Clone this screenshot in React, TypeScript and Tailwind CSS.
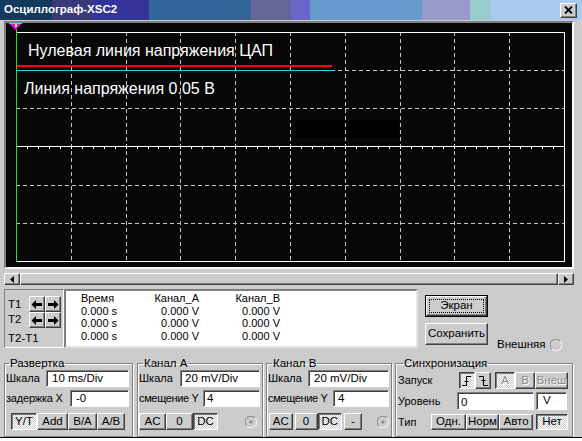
import React from "react";

const RAISED =
  "bg-[#cccccc] border border-t-white border-l-white border-r-[#404040] border-b-[#404040] shadow-[inset_-1px_-1px_0_#808080]";
const PRESSED =
  "bg-[repeating-conic-gradient(#ffffff_0%_25%,#cccccc_0%_50%)] bg-size-[2px_2px] border border-t-[#404040] border-l-[#404040] border-r-white border-b-white shadow-[inset_1px_1px_0_#808080]";
const FIELD =
  "bg-white border border-t-[#808080] border-l-[#808080] border-r-white border-b-white shadow-[inset_1px_1px_0_#404040] flex items-center whitespace-nowrap text-[11.5px] leading-none";

function Btn({
  cls,
  on = false,
  dis = false,
  children,
}: {
  cls: string;
  on?: boolean;
  dis?: boolean;
  children?: React.ReactNode;
}) {
  return (
    <div
      className={`${on ? PRESSED : RAISED} ${cls} flex items-center justify-center text-[11.5px] leading-none whitespace-nowrap ${
        dis ? "text-[#8a8a8a] [text-shadow:1px_1px_0_#ffffff]" : "text-black"
      }`}
    >
      {children}
    </div>
  );
}

function Group({
  cls,
  legendCls,
  title,
  children,
}: {
  cls: string;
  legendCls: string;
  title: string;
  children?: React.ReactNode;
}) {
  return (
    <fieldset
      className={`${cls} h-[80px] min-w-0 border border-[#808080] shadow-[inset_1px_1px_0_#ffffff,1px_1px_0_#ffffff] text-[11px]`}
    >
      <legend className={`${legendCls} px-[1px] text-[11.5px] leading-[13px]`}>{title}</legend>
      {children}
    </fieldset>
  );
}

function Radio({ dot = false }: { dot?: boolean }) {
  return (
    <svg width="12" height="12" viewBox="0 0 12 12" className="block">
      <path d="M10.2 1.8 A5.5 5.5 0 0 0 1.8 10.2" stroke="#808080" strokeWidth="1" fill="none" />
      <path d="M1.8 10.2 A5.5 5.5 0 0 0 10.2 1.8" stroke="#ffffff" strokeWidth="1" fill="none" />
      <circle cx="6" cy="6" r="4" fill="#cccccc" />
      {dot && <circle cx="6" cy="6" r="1.6" fill="#8a8a8a" />}
    </svg>
  );
}

function Arrow({ dir }: { dir: "l" | "r" }) {
  return (
    <div className={`${RAISED} w-[16px] h-[16px] flex items-center justify-center`}>
      <svg width="12" height="11" viewBox="0 0 12 11" className="block">
        {dir === "l" ? (
          <polygon points="0.5,5.5 5,1 5,4 11,4 11,7 5,7 5,10" fill="#000" />
        ) : (
          <polygon points="11.5,5.5 7,1 7,4 1,4 1,7 7,7 7,10" fill="#000" />
        )}
      </svg>
    </div>
  );
}

function ScopeGrid() {
  const L = 10,
    R = 558,
    T = 9,
    B = 238;
  const vx = [1, 2, 3, 4, 5, 6, 7, 8, 9].map((i) => Math.round(L + 54.8 * i) + 0.5);
  const hy = [1, 2, 4, 5].map((j) => Math.round(T + 38.1667 * j) + 0.5);
  const cy = 123.5;
  const ticks = Array.from({ length: 49 }, (_, i) => Math.round(L + 10.96 * (i + 1)) + 0.5);
  return (
    <svg width="566" height="244" viewBox="0 0 566 244" className="block" shapeRendering="crispEdges">
      <rect x="289" y="97" width="103" height="18" fill="#000000" />
      {vx.map((x) => (
        <line key={"v" + x} x1={x} y1={T} x2={x} y2={B} stroke="#c4c4c4" strokeDasharray="4 3" />
      ))}
      {hy.map((y) => (
        <line key={"h" + y} x1={L} y1={y} x2={R} y2={y} stroke="#c4c4c4" strokeDasharray="4 3" />
      ))}
      <line x1={L} y1={T + 0.5} x2={R + 1} y2={T + 0.5} stroke="#ffffff" />
      <line x1={R + 0.5} y1={T} x2={R + 0.5} y2={B + 1} stroke="#ffffff" />
      <line x1={L} y1={B + 0.5} x2={R + 1} y2={B + 0.5} stroke="#ffffff" />
      <line x1={L} y1={cy} x2={R + 1} y2={cy} stroke="#ffffff" strokeWidth="1" />
      {ticks.map((x) => (
        <line key={"t" + x} x1={x} y1={cy} x2={x} y2={cy + 2.5} stroke="#ffffff" />
      ))}
      <rect x={L} y="42" width="316" height="2" fill="#ff0000" />
      <rect x={L} y="47" width="317" height="1" fill="#22d8d8" />
      <line x1={L + 0.5} y1="6" x2={L + 0.5} y2={B + 1} stroke="#22dd22" />
      <polygon points="3,0 16,0 9.5,7" fill="#ff00ff" shapeRendering="auto" />
      <rect x="3" y="0" width="13" height="1" fill="#00ffff" />
      <rect x="8.5" y="1" width="2" height="3" fill="#ffff00" />
    </svg>
  );
}

export default function App() {
  return (
    <div className="w-[582px] h-[441px] overflow-hidden bg-[#cccccc] flex flex-col text-black font-['Liberation_Sans',Arial,sans-serif]">
      {/* Title bar */}
      <div className="h-[20px] shrink-0 flex items-center justify-between pl-[4px] pr-[5px] bg-[linear-gradient(to_right,#133a5e_0px,#133a5e_52px,#38387a_52px,#38387a_93px,#333399_93px,#333399_149px,#336699_149px,#336699_251px,#666699_251px,#666699_291px,#6666cc_291px,#6666cc_310px,#6699cc_310px,#6699cc_422px,#9999cc_422px,#9999cc_470px,#99cccc_470px,#99cccc_491px,#a6caf0_491px)]">
        <span className="text-white font-bold text-[11.5px] leading-none whitespace-nowrap">Осциллограф-XSC2</span>
        <div className={`${RAISED} w-[17px] h-[15px] flex items-center justify-center`}>
          <svg width="9" height="8" viewBox="0 0 9 8" className="block">
            <path d="M1 0.5 L8 7.5 M8 0.5 L1 7.5" stroke="#000" strokeWidth="1.8" />
          </svg>
        </div>
      </div>

      {/* Scope screen */}
      <div className="ml-[4px] mt-[1px] w-[570px] h-[248px] shrink-0 border-2 border-t-[#808080] border-l-[#808080] border-r-white border-b-white">
        <div className="relative w-[566px] h-[244px] bg-[#070707]">
          <ScopeGrid />
          <div className="absolute left-[22px] top-[20px] text-white text-[16px] leading-[16px] whitespace-nowrap">
            Нулевая линия напряжения ЦАП
          </div>
          <div className="absolute left-[18px] top-[58px] text-white text-[16px] leading-[16px] whitespace-nowrap">
            Линия напряжения 0.05 В
          </div>
        </div>
      </div>

      {/* Scrollbar */}
      <div className="ml-[4px] mt-[4px] w-[570px] h-[12px] shrink-0 flex bg-[#e4e4e4]">
        <div className={`${RAISED} w-[16px] h-[12px] flex items-center justify-center`}>
          <svg width="4" height="7" viewBox="0 0 4 7" className="block">
            <polygon points="0,3.5 4,0 4,7" fill="#000" />
          </svg>
        </div>
        <div className={`${RAISED} flex-1 h-[12px]`} />
        <div className={`${RAISED} w-[16px] h-[12px] flex items-center justify-center`}>
          <svg width="4" height="7" viewBox="0 0 4 7" className="block">
            <polygon points="4,3.5 0,0 0,7" fill="#000" />
          </svg>
        </div>
      </div>

      {/* Cursor / readout row */}
      <div className="flex ml-[4px] mt-[4px] h-[59px] shrink-0">
        <div className="w-[60px] h-[59px] border border-t-[#808080] border-l-[#808080] border-r-white border-b-white pt-[6px] pl-[3px] text-[11.5px]">
          <div className="flex items-center h-[16px]">
            <span className="w-[21px] leading-[14px]">T1</span>
            <Arrow dir="l" />
            <Arrow dir="r" />
          </div>
          <div className="flex items-start h-[16px]">
            <span className="w-[21px] leading-[14px]">T2</span>
            <Arrow dir="l" />
            <Arrow dir="r" />
          </div>
          <div className="mt-[3px] leading-[14px]">T2-T1</div>
        </div>

        <div className="w-[354px] h-[59px] bg-white border-2 border-t-[#808080] border-l-[#808080] border-r-[#e4e4e4] border-b-[#e4e4e4] pl-[15px] pt-[1px] text-[11px]">
          <div className="grid grid-cols-[73px_45px_81px] grid-rows-[13px_12px_13px_13px] leading-[13px] whitespace-nowrap">
            <span>Время</span>
            <span className="text-right">Канал_А</span>
            <span className="text-right">Канал_В</span>
            <span>0.000 s</span>
            <span className="text-right">0.000 V</span>
            <span className="text-right">0.000 V</span>
            <span>0.000 s</span>
            <span className="text-right">0.000 V</span>
            <span className="text-right">0.000 V</span>
            <span>0.000 s</span>
            <span className="text-right">0.000 V</span>
            <span className="text-right">0.000 V</span>
          </div>
        </div>

        <div className="ml-[7px] mt-[6px] flex flex-col gap-[6px]">
          <div className="w-[63px] h-[22px] border border-black">
            <div className={`${RAISED} w-full h-full p-[2px] flex`}>
              <div className="flex-1 border border-dotted border-black flex items-center justify-center text-[11.5px] leading-none">
                Экран
              </div>
            </div>
          </div>
          <Btn cls="w-[63px] h-[22px]">Сохранить</Btn>
        </div>

        <div className="ml-[9px] mt-[50px] h-[12px] flex items-center gap-[5px] text-[11.5px] leading-none whitespace-nowrap">
          <span>Внешняя</span>
          <Radio />
        </div>
      </div>

      {/* Group boxes */}
      <div className="flex ml-[4px] mt-[9px] h-[80px] shrink-0">
        <Group cls="w-[129px] pl-[1px] pr-[3px]" legendCls="ml-[3px]" title="Развертка">
          <div className="flex items-center justify-between h-[17px] whitespace-nowrap">
            <span>Шкала</span>
            <div className={`${FIELD} w-[83px] h-[17px] pl-[5px]`}>10 ms/Div</div>
          </div>
          <div className="mt-[3px] flex items-center justify-between h-[17px] whitespace-nowrap">
            <span className="tracking-[-0.2px]">задержка X</span>
            <div className={`${FIELD} w-[59px] h-[17px] pl-[5px]`}>-0</div>
          </div>
          <div className="mt-[6px] ml-[5px] flex">
            <Btn cls="w-[26px] h-[17px]" on>
              Y/T
            </Btn>
            <Btn cls="w-[31px] h-[17px]">Add</Btn>
            <Btn cls="w-[29px] h-[17px]">B/A</Btn>
            <Btn cls="w-[28px] h-[17px]">A/B</Btn>
          </div>
        </Group>

        <Group cls="ml-[4px] w-[126px] pl-[1px] pr-[2px]" legendCls="ml-[4px]" title="Канал А">
          <div className="flex items-center justify-between h-[17px] whitespace-nowrap">
            <span>Шкала</span>
            <div className={`${FIELD} w-[80px] h-[17px] pl-[4px]`}>20 mV/Div</div>
          </div>
          <div className="mt-[3px] flex items-center justify-between h-[17px] whitespace-nowrap">
            <span className="tracking-[-0.35px]">смещение Y</span>
            <div className={`${FIELD} w-[57px] h-[17px] pl-[3px]`}>4</div>
          </div>
          <div className="mt-[6px] flex items-center">
            <Btn cls="w-[27px] h-[17px]">AC</Btn>
            <Btn cls="w-[27px] h-[17px]">0</Btn>
            <Btn cls="w-[25px] h-[17px]" on>
              DC
            </Btn>
            <div className="ml-auto mr-[3px]">
              <Radio dot />
            </div>
          </div>
        </Group>

        <Group cls="ml-[3px] w-[126px] pl-[1px] pr-[2px]" legendCls="ml-[4px]" title="Канал В">
          <div className="flex items-center justify-between h-[17px] whitespace-nowrap">
            <span>Шкала</span>
            <div className={`${FIELD} w-[81px] h-[17px] pl-[5px]`}>20 mV/Div</div>
          </div>
          <div className="mt-[3px] flex items-center justify-between h-[17px] whitespace-nowrap">
            <span className="tracking-[-0.35px]">смещение Y</span>
            <div className={`${FIELD} w-[56px] h-[17px] pl-[4px]`}>4</div>
          </div>
          <div className="mt-[6px] ml-[1px] flex items-center">
            <Btn cls="w-[25px] h-[17px]">AC</Btn>
            <div className="ml-[2px]">
              <Btn cls="w-[23px] h-[17px]">0</Btn>
            </div>
            <Btn cls="w-[26px] h-[17px]" on>
              DC
            </Btn>
            <div className="ml-[2px]">
              <Btn cls="w-[18px] h-[17px]">-</Btn>
            </div>
            <div className="ml-[15px]">
              <Radio dot />
            </div>
          </div>
        </Group>

        <Group cls="ml-[3px] w-[178px] pl-[2px]" legendCls="ml-[5px]" title="Синхронизация">
          <div className="mt-[2px] flex items-center h-[17px] whitespace-nowrap">
            <span className="w-[61px]">Запуск</span>
            <Btn cls="w-[16px] h-[17px]" on>
              <svg width="10" height="10" viewBox="0 0 10 10" className="block">
                <path d="M0 9.5 H4.5 V0.5 H9 M2.5 5.5 H6.5" stroke="#000" strokeWidth="1" fill="none" />
              </svg>
            </Btn>
            <Btn cls="w-[16px] h-[17px]">
              <svg width="10" height="10" viewBox="0 0 10 10" className="block">
                <path d="M1 0.5 H5.5 V9.5 H10 M3.5 4.5 H7.5" stroke="#000" strokeWidth="1" fill="none" />
              </svg>
            </Btn>
            <div className="ml-[4px] flex">
              <Btn cls="w-[20px] h-[17px]" on dis>
                A
              </Btn>
              <Btn cls="w-[20px] h-[17px]" dis>
                B
              </Btn>
              <Btn cls="w-[33px] h-[17px]" dis>
                Внеш
              </Btn>
            </div>
          </div>
          <div className="mt-[3px] flex items-center h-[18px] whitespace-nowrap">
            <span className="w-[59px]">Уровень</span>
            <div className={`${FIELD} w-[77px] h-[18px] pl-[3px] pt-[3px]`}>0</div>
            <div className={`${FIELD} ml-[2px] w-[31px] h-[18px] pl-[6px]`}>V</div>
          </div>
          <div className="mt-[4px] flex items-center h-[16px] whitespace-nowrap">
            <span className="w-[33px]">Тип</span>
            <Btn cls="w-[35px] h-[16px]">Одн.</Btn>
            <Btn cls="w-[33px] h-[16px]">Норм</Btn>
            <Btn cls="w-[34px] h-[16px]">Авто</Btn>
            <div className="ml-[3px]">
              <Btn cls="w-[32px] h-[16px]" on>
                Нет
              </Btn>
            </div>
          </div>
        </Group>
      </div>

      <div className="h-[1px] shrink-0 bg-black" />
      <div className="flex-1 bg-white" />
    </div>
  );
}
